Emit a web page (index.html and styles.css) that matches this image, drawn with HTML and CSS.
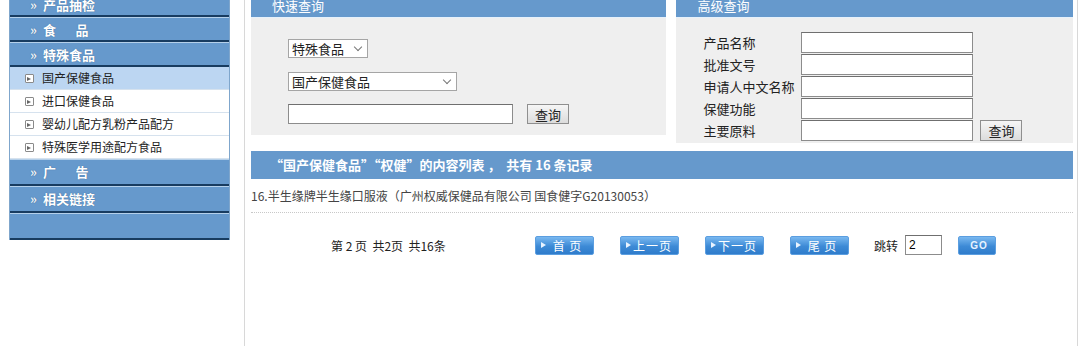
FILE: index.html
```html
<!DOCTYPE html>
<html lang="zh-CN">
<head>
    <meta charset="UTF-8">
    <title>保健食品查询</title>
    <link rel="stylesheet" href="styles.css">
</head>
<body>

<div class="page">
    <!-- 左侧菜单 -->
    <div class="sidebar">
        <div class="menu-title"><span class="arrow">»</span>产品抽检</div>
        <div class="menu-title"><span class="arrow">»</span>食&emsp;&ensp;品</div>
        <div class="menu-title"><span class="arrow">»</span>特殊食品</div>
        <div class="menu-item active"><span class="ico"></span>国产保健食品</div>
        <div class="menu-item"><span class="ico"></span>进口保健食品</div>
        <div class="menu-item"><span class="ico"></span>婴幼儿配方乳粉产品配方</div>
        <div class="menu-item"><span class="ico"></span>特殊医学用途配方食品</div>
        <div class="menu-title tall"><span class="arrow">»</span>广&emsp;&ensp;告</div>
        <div class="menu-title tall"><span class="arrow">»</span>相关链接</div>
        <div class="menu-title tall"></div>
    </div>

    <!-- 右侧内容 -->
    <div class="main">
        <div class="search-row">
            <div class="panel quick">
                <div class="panel-head">快速查询</div>
                <div class="panel-body">
                    <div class="fake-select short">特殊食品<span class="caret"></span></div>
                    <div class="fake-select long">国产保健食品<span class="caret"></span></div>
                    <div class="quick-line">
                        <input type="text" class="txt wide">
                        <button class="gray-btn">查询</button>
                    </div>
                </div>
            </div>

            <div class="panel advanced">
                <div class="panel-head">高级查询</div>
                <div class="panel-body">
                    <div class="adv-grid">
                        <label>产品名称</label><input type="text" class="txt"><span></span>
                        <label>批准文号</label><input type="text" class="txt"><span></span>
                        <label>申请人中文名称</label><input type="text" class="txt"><span></span>
                        <label>保健功能</label><input type="text" class="txt"><span></span>
                        <label>主要原料</label><input type="text" class="txt"><button class="gray-btn">查询</button>
                    </div>
                </div>
            </div>
        </div>

        <div class="result-head">“国产保健食品”“权健”的内容列表 ， &nbsp;共有 16 条记录</div>
        <div class="result-item">16.半生缘牌半生缘口服液（广州权威保健品有限公司 国食健字G20130053）</div>

        <div class="pager">
            <span class="pager-info">第 2 页 &nbsp;共2页 &nbsp;共16条</span>
            <span class="blue-btn">首 页</span>
            <span class="blue-btn">上一页</span>
            <span class="blue-btn">下一页</span>
            <span class="blue-btn">尾 页</span>
            <span class="jump">跳转</span>
            <input type="text" class="txt page-no" value="2">
            <span class="blue-btn go">GO</span>
        </div>
    </div>
</div>

</body>
</html>
```

FILE: styles.css
```css
body {
    margin: 0;
    padding: 0;
    background: #fff;
    font-family: "Noto Sans CJK SC", "DejaVu Sans", sans-serif;
    font-size: 12px;
    color: #333;
}

.page {
    display: flex;
    align-items: flex-start;
    margin-top: -10px; /* 页面已向下滚动 */
    height: 356px;
}

/* 左侧菜单 */
.sidebar {
    width: 219px;
    margin-left: 9px;
    margin-top: 2px;
    border-left: 1px solid #7fa6cc;
    border-right: 1px solid #7fa6cc;
    flex-shrink: 0;
}

.menu-title {
    height: 22px;
    line-height: 23px;
    background: #6699cc;
    border-top: 1px solid #b5d0ea;
    border-bottom: 2px solid #183c60;
    color: #fff;
    font-size: 13px;
    font-weight: bold;
    padding-left: 20px;
    text-shadow: 0 0 1px #34608c;
}

.menu-title.tall {
    height: 24px;
    line-height: 24px;
}

.menu-title .arrow {
    display: inline-block;
    width: 13px;
    font-size: 13px;
    font-weight: bold;
    color: #f2f7fc;
}

.menu-item {
    height: 22px;
    line-height: 22px;
    border-bottom: 1px solid #d6e2ee;
    padding-left: 15px;
    background: #fff;
    color: #222;
    display: flex;
    align-items: center;
}

.menu-item.active {
    background: #bcd6f2;
}

.menu-item .ico {
    width: 7px;
    height: 7px;
    border: 1px solid #8a8a8a;
    border-radius: 1px;
    margin-right: 8px;
    position: relative;
    background: #fff;
}

.menu-item .ico::after {
    content: "";
    position: absolute;
    left: 1px;
    top: 2px;
    width: 0;
    height: 0;
    border-left: 4px solid #666;
    border-top: 2px solid transparent;
    border-bottom: 2px solid transparent;
}

/* 右侧内容 */
.main {
    margin-left: 14px;
    width: 826px;
    height: 356px;
    border-left: 1px solid #d8d8d8;
    border-right: 1px solid #d8d8d8;
    padding-left: 6px;
}

.search-row {
    display: flex;
    align-items: flex-start;
    width: 822px;
}

.panel {
    background: #efefef;
}

.quick {
    width: 416px;
}

.advanced {
    width: 397px;
    margin-left: 10px;
}

.panel-head {
    height: 28px;
    border-bottom: 1px solid #e6f1fb;
    background: #6699cc;
    color: #fff;
    font-size: 13px;
    padding-left: 21px;
    line-height: 16px;
    box-sizing: border-box;
    display: flex;
    align-items: flex-end;
    padding-bottom: 3px;
}

.quick .panel-body {
    height: 117px;
    box-sizing: border-box;
    padding: 21px 0 0 37px;
}

.fake-select {
    height: 17px;
    line-height: 17px;
    border: 1px solid #a5a5a5;
    background: #fff;
    padding-left: 3px;
    position: relative;
    font-size: 13px;
    color: #222;
}

.fake-select.short {
    width: 75px;
}

.fake-select.long {
    width: 164px;
    margin-top: 14px;
}

.caret {
    position: absolute;
    right: 6px;
    top: 4px;
    width: 5px;
    height: 5px;
    border-right: 1px solid #777;
    border-bottom: 1px solid #777;
    transform: rotate(45deg);
}

.quick-line {
    display: flex;
    align-items: center;
    margin-top: 13px;
}

.txt {
    box-sizing: border-box;
    height: 20px;
    border: 1px solid #8c8c8c;
    border-top-color: #6f6f6f;
    background: #fff;
    margin: 0;
    padding: 0 3px;
    font-family: "Liberation Sans", sans-serif;
    font-size: 13px;
}

.txt.wide {
    width: 225px;
}

.gray-btn {
    height: 20px;
    width: 42px;
    margin-left: 14px;
    padding: 0;
    border: 1px solid #8f8f8f;
    background: linear-gradient(#f6f6f6, #dcdcdc);
    font-family: "Noto Sans CJK SC", sans-serif;
    font-size: 13px;
    color: #222;
    line-height: 17px;
}

.advanced .panel-body {
    height: 125px;
    box-sizing: border-box;
    padding: 14px 0 0 27px;
}

.adv-grid {
    display: grid;
    grid-template-columns: 98px 172px auto;
    row-gap: 1px;
    align-items: center;
}

.adv-grid label {
    font-size: 13px;
    color: #222;
    line-height: 20px;
}

.adv-grid .txt {
    width: 172px;
    height: 21px;
}

.adv-grid .gray-btn {
    margin-left: 7px;
    width: 42px;
    height: 21px;
}

/* 结果列表 */
.result-head {
    margin-top: 8px;
    width: 822px;
    height: 28px;
    line-height: 28px;
    background: #6699cc;
    color: #fff;
    font-size: 13px;
    font-weight: bold;
    padding-left: 19px;
    box-sizing: border-box;
}

.result-item {
    width: 822px;
    height: 33px;
    line-height: 34px;
    border-bottom: 1px dotted #c8c8c8;
    color: #444;
    font-size: 12px;
}

/* 分页 */
.pager {
    display: flex;
    align-items: center;
    height: 20px;
    margin-top: 22px;
    padding-left: 80px;
}

.pager-info {
    width: 204px;
    font-size: 12px;
    color: #222;
}

.blue-btn {
    width: 59px;
    height: 19px;
    line-height: 18px;
    box-sizing: border-box;
    margin-right: 26px;
    border-radius: 2px;
    background: linear-gradient(#79b8f0, #3d8ad6 55%, #2f7ccb);
    border: 1px solid #5b9ee0;
    color: #fff;
    font-size: 12px;
    text-align: center;
    position: relative;
    padding-left: 6px;
    letter-spacing: 1px;
}

.blue-btn::before {
    content: "";
    position: absolute;
    left: 5px;
    top: 5px;
    border-left: 5px solid #e8f3ff;
    border-top: 3px solid transparent;
    border-bottom: 3px solid transparent;
}

.blue-btn.go {
    width: 38px;
    padding-left: 4px;
    font-family: "Liberation Sans", sans-serif;
    font-size: 10px;
    font-weight: bold;
    color: #e8f3ff;
}

.blue-btn.go::before {
    display: none;
}

.jump {
    font-size: 12px;
    color: #222;
    margin-right: 7px;
    margin-left: -1px;
}

.txt.page-no {
    width: 37px;
    height: 20px;
    margin-right: 16px;
    font-size: 12px;
}
```
